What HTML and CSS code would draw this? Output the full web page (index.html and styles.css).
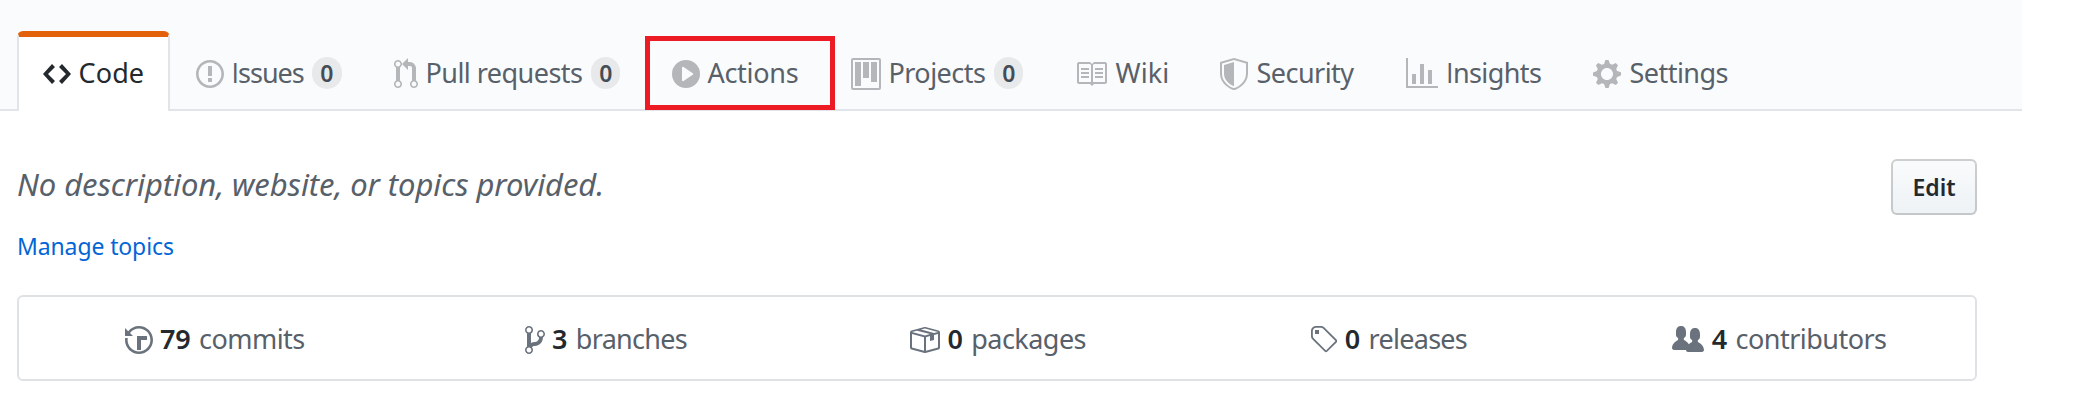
FILE: index.html
```
<!DOCTYPE html>
<html lang="en">
<head>
<meta charset="utf-8">
<title>Repository</title>
<link rel="stylesheet" href="styles.css">
</head>
<body>
<nav class="reponav">
  <a class="tab tab-selected"><svg class="icon" width="28" height="32" viewBox="0 0 14 16"><path fill-rule="evenodd" d="M9.5 3L8 4.5 11.5 8 8 11.5 9.5 13 14 8 9.5 3zm-5 0L0 8l4.5 5L6 11.5 2.5 8 6 4.5 4.5 3z"/></svg><span class="label label-code">Code</span></a>
  <a class="tab"><svg class="icon" width="28" height="32" viewBox="0 0 14 16"><path fill-rule="evenodd" d="M7 2.3c3.14 0 5.7 2.56 5.7 5.7s-2.56 5.7-5.7 5.7A5.71 5.71 0 0 1 1.3 8c0-3.14 2.56-5.7 5.7-5.7zM7 1C3.14 1 0 4.14 0 8s3.14 7 7 7 7-3.14 7-7-3.14-7-7-7zm1 3H6v5h2V4zm0 6H6v2h2v-2z"/></svg><span class="label label-issues">Issues</span><span class="counter">0</span></a>
  <a class="tab"><svg class="icon" width="24" height="32" viewBox="0 0 12 16"><path fill-rule="evenodd" d="M11 11.28V5c-.03-.78-.34-1.47-.94-2.06C9.46 2.35 8.78 2.03 8 2H7V0L4 3l3 3V4h1c.27.02.48.11.69.31.21.2.3.42.31.69v6.28A1.993 1.993 0 0 0 10 15a1.993 1.993 0 0 0 1-3.72zm-1 2.92c-.66 0-1.2-.55-1.2-1.2 0-.65.55-1.2 1.2-1.2.65 0 1.2.55 1.2 1.2 0 .65-.55 1.2-1.2 1.2zM4 3c0-1.11-.89-2-2-2a1.993 1.993 0 0 0-1 3.72v6.56A1.993 1.993 0 0 0 2 15a1.993 1.993 0 0 0 1-3.72V4.72c.59-.34 1-.98 1-1.72zm-.8 10c0 .66-.55 1.2-1.2 1.2-.65 0-1.2-.55-1.2-1.2 0-.65.55-1.2 1.2-1.2.65 0 1.2.55 1.2 1.2zM2 4.2C1.34 4.2.8 3.65.8 3c0-.65.55-1.2 1.2-1.2.65 0 1.2.55 1.2 1.2 0 .65-.55 1.2-1.2 1.2z"/></svg><span class="label">Pull requests</span><span class="counter counter-wide">0</span></a>
  <a class="tab tab-marked"><svg class="icon" width="28" height="32" viewBox="0 0 14 16"><path fill-rule="evenodd" d="M14 8A7 7 0 1 1 0 8a7 7 0 0 1 14 0zm-8.223 3.482l4.599-3.066a.5.5 0 0 0 0-.832L5.777 4.518A.5.5 0 0 0 5 4.934v6.132a.5.5 0 0 0 .777.416z"/></svg><span class="label label-actions">Actions</span></a>
  <a class="tab"><svg class="icon" width="30" height="32" viewBox="0 0 15 16"><path fill-rule="evenodd" d="M10 12h3V2h-3v10zm-4-2h3V2H6v8zm-4 4h3V2H2v12zm-1 1h13V1H1v14zM14 0H1a1 1 0 0 0-1 1v14a1 1 0 0 0 1 1h13a1 1 0 0 0 1-1V1a1 1 0 0 0-1-1z"/></svg><span class="label">Projects</span><span class="counter counter-wide">0</span></a>
  <a class="tab"><svg class="icon" width="32" height="32" viewBox="0 0 16 16"><path fill-rule="evenodd" d="M3 5h4v1H3V5zm0 3h4V7H3v1zm0 2h4V9H3v1zm11-5h-4v1h4V5zm0 2h-4v1h4V7zm0 2h-4v1h4V9zm2-6v9c0 .55-.45 1-1 1H9.5l-1 1-1-1H2c-.55 0-1-.45-1-1V3c0-.55.45-1 1-1h5.5l1 1 1-1H15c.55 0 1 .45 1 1zm-8 .5L7.5 3H2v9h6V3.5zm7-.5H9.5l-.5.5V12h6V3z"/></svg><span class="label label-code label-wide">Wiki</span></a>
  <a class="tab"><svg class="icon" width="28" height="32" viewBox="0 0 14 16"><path fill-rule="evenodd" d="M0 2l7-2 7 2v6.02C14 12.69 8.69 16 7 16c-1.69 0-7-3.31-7-7.98V2zm1 .75L7 1l6 1.75v5.268C13 12.104 8.449 15 7 15c-1.449 0-6-2.896-6-6.982V2.75zm1 .75L7 2v12c-1.207 0-5-2.482-5-5.985V3.5z"/></svg><span class="label label-wide">Security</span></a>
  <a class="tab"><svg class="icon" width="32" height="32" viewBox="0 0 16 16"><path fill-rule="evenodd" d="M16 14v1H0V0h1v14h15zM5 13H3V8h2v5zm4 0H7V3h2v10zm4 0h-2V6h2v7z"/></svg><span class="label label-insights">Insights</span></a>
  <a class="tab"><svg class="icon" width="28" height="32" viewBox="0 0 14 16"><path fill-rule="evenodd" d="M14 8.77v-1.6l-1.94-.64-.45-1.09.88-1.84-1.13-1.13-1.81.91-1.09-.45-.69-1.92h-1.6l-.63 1.94-1.11.45-1.84-.88-1.13 1.13.91 1.81-.45 1.09L0 7.23v1.59l1.94.64.45 1.09-.88 1.84 1.13 1.13 1.81-.91 1.09.45.69 1.92h1.59l.63-1.94 1.11-.45 1.84.88 1.13-1.13-.92-1.81.47-1.09L14 8.75v.02zM7 11c-1.66 0-3-1.34-3-3s1.34-3 3-3 3 1.34 3 3-1.34 3-3 3z"/></svg><span class="label label-wide">Settings</span></a>
</nav>
<main class="content">
  <header class="about">
    <div>
      <p class="description">No description, website, or topics provided.</p>
      <a class="manage">Manage topics</a>
    </div>
    <button class="edit" type="button">Edit</button>
  </header>
  <ul class="summary">
    <li class="stat"><svg class="icon" width="28" height="32" viewBox="0 0 14 16"><path fill-rule="evenodd" d="M8 13H6V6h5v2H8v5zM7 1C4.81 1 2.87 2.02 1.59 3.59L0 2v4h4L2.5 4.5C3.55 3.17 5.17 2.3 7 2.3c3.14 0 5.7 2.56 5.7 5.7s-2.56 5.7-5.7 5.7A5.71 5.71 0 0 1 1.3 8c0-.34.03-.67.09-1H.08C.03 7.33 0 7.66 0 8c0 3.86 3.14 7 7 7s7-3.14 7-7-3.14-7-7-7z"/></svg><strong class="num">79</strong><span class="unit">commits</span></li>
    <li class="stat"><svg class="icon" width="20" height="32" viewBox="0 0 10 16"><path fill-rule="evenodd" d="M10 5c0-1.11-.89-2-2-2a1.993 1.993 0 0 0-1 3.72v.3c-.02.52-.23.98-.63 1.38-.4.4-.86.61-1.38.63-.83.02-1.48.16-2 .45V4.72a1.993 1.993 0 0 0-1-3.72C.88 1 0 1.89 0 3a2 2 0 0 0 1 1.72v6.56c-.59.35-1 .99-1 1.72 0 1.11.89 2 2 2 1.11 0 2-.89 2-2 0-.53-.2-1-.53-1.36.09-.06.48-.41.59-.47.25-.11.56-.17.94-.17 1.05-.05 1.95-.45 2.75-1.25S8.95 7.77 9 6.73h-.02C9.59 6.37 10 5.73 10 5zM2 1.8c.66 0 1.2.55 1.2 1.2 0 .65-.55 1.2-1.2 1.2C1.35 4.2.8 3.65.8 3c0-.65.55-1.2 1.2-1.2zm0 12.41c-.66 0-1.2-.55-1.2-1.2 0-.65.55-1.2 1.2-1.2.65 0 1.2.55 1.2 1.2 0 .65-.55 1.2-1.2 1.2zm6-8c-.66 0-1.2-.55-1.2-1.2 0-.65.55-1.2 1.2-1.2.65 0 1.2.55 1.2 1.2 0 .65-.55 1.2-1.2 1.2z"/></svg><strong class="num">3</strong><span class="unit unit-tight">branches</span></li>
    <li class="stat"><svg class="icon" width="32" height="32" viewBox="0 0 16 16"><path fill-rule="evenodd" d="M1 4.27v7.47c0 .45.3.84.75.97l6.5 1.73c.16.05.34.05.5 0l6.5-1.73c.45-.13.75-.52.75-.97V4.27c0-.45-.3-.84-.75-.97l-6.5-1.74a1.4 1.4 0 0 0-.5 0L1.75 3.3c-.45.13-.75.52-.75.97zm7 9.09l-6-1.59V5l6 1.61v6.75zM2 4l2.5-.67L11 5.06l-2.5.67L2 4zm13 7.77l-6 1.59V6.61l2-.55V8.5l2-.53V5.53L15 5v6.77zm-2-7.24L6.5 2.8l2-.53L15 4l-2 .53z"/></svg><strong class="num">0</strong><span class="unit">packages</span></li>
    <li class="stat"><svg class="icon" width="28" height="32" viewBox="0 0 14 16"><path fill-rule="evenodd" d="M7.73 1.73C7.26 1.26 6.62 1 5.96 1H3.5C2.13 1 1 2.13 1 3.5v2.47c0 .66.27 1.3.73 1.77l6.06 6.06c.39.39 1.02.39 1.41 0l4.59-4.59a.996.996 0 0 0 0-1.41L7.73 1.73zM2.38 7.09c-.31-.3-.47-.7-.47-1.13V3.5c0-.88.72-1.59 1.59-1.59h2.47c.42 0 .83.16 1.13.47l6.14 6.13-4.73 4.73-6.13-6.15zM3.01 3h2v2H3V3h.01z"/></svg><strong class="num">0</strong><span class="unit unit-tight">releases</span></li>
    <li class="stat"><svg class="icon" width="32" height="32" viewBox="0 0 16 16"><path fill-rule="evenodd" d="M16 12.999c0 .439-.45 1-1 1H7.995c-.539 0-.994-.447-.995-.999H1c-.54 0-1-.561-1-1 0-2.634 3-4 3-4s.229-.409 0-1c-.841-.621-1.058-.59-1-3 .058-2.419 1.367-3 2.5-3s2.442.58 2.5 3c.058 2.41-.159 2.379-1 3-.229.59 0 1 0 1s1.549.711 2.42 2.088C9.196 9.369 10 8.999 10 8.999s.229-.409 0-1c-.841-.62-1.058-.59-1-3 .058-2.419 1.367-3 2.5-3s2.437.581 2.495 3c.059 2.41-.158 2.38-1 3-.229.59 0 1 0 1s3.005 1.366 3.005 4"/></svg><strong class="num">4</strong><span class="unit">contributors</span></li>
  </ul>
</main>
</body>
</html>
```
FILE: styles.css
```
*, *::after { box-sizing: border-box; }
body {
  margin: 0;
  background: #fff;
  color: #24292e;
  font-family: "Noto Sans", "Open Sans", sans-serif;
}
.icon { display: block; flex: none; fill: currentColor; }

/* Repository navigation */
.reponav {
  display: grid;
  grid-template-columns: 153px 198px 278px 179px 224px 145px 186px 187px 200px;
  width: 2022px;
  height: 111px;
  padding: 31px 0 0 17px;
  background: #fafbfc;
  border-bottom: 2px solid #e1e4e8;
}
.tab {
  display: flex;
  align-items: center;
  height: 80px;
  padding: 6px 0 0 26px;
  color: #586069;
  font-size: 27px;
  line-height: 36px;
  white-space: nowrap;
}
.tab .icon { color: #b5b6b9; }
.tab-selected {
  padding: 0 0 0 24px;
  background: #fff;
  color: #24292e;
  border: solid #e1e4e8;
  border-width: 6px 2px 0;
  border-top-color: #e36209;
  border-radius: 6px 6px 0 0;
}
.tab-selected .icon { color: #24292e; }
.label { display: block; margin: 0 0 3px 7.5px; letter-spacing: -0.54px; }
.label-code { letter-spacing: 0.12px; }
.label-wide { margin-left: 8.5px; }
.label-actions { letter-spacing: -0.3px; }
.label-issues { margin-left: 7.5px; letter-spacing: -1px; }
.label-insights { margin-left: 8px; letter-spacing: -0.6px; }
.label-issues::first-letter,
.label-insights::first-letter { font-family: "Open Sans", sans-serif; }
.counter {
  width: 30px;
  height: 32px;
  margin: 0 0 2px 8px;
  border-radius: 16px;
  background: #e8e9eb;
  color: #444d56;
  font-size: 23px;
  font-weight: 600;
  line-height: 33px;
  text-align: center;
}
.counter-wide { margin-left: 9px; width: 29px; }
.tab-marked { position: relative; }
.tab-marked::after {
  content: "";
  position: absolute;
  left: -1px;
  top: 5px;
  width: 190px;
  height: 74px;
  border: 5px solid #ed1c24;
}

/* Description and summary */
.content { width: 1960px; margin-left: 17px; padding-top: 48px; }
.about { display: flex; justify-content: space-between; align-items: flex-start; height: 136px; }
.description {
  margin: 3px 0 0;
  color: #586069;
  font-size: 31px;
  font-style: italic;
  line-height: 44px;
  letter-spacing: -0.08px;
}
.manage {
  display: block;
  margin-top: 24px;
  color: #0366d6;
  font-size: 23px;
  line-height: 32px;
  letter-spacing: -0.12px;
}
.edit {
  width: 86px;
  height: 56px;
  padding: 0 0 1px;
  border: 2px solid rgba(27, 31, 35, 0.2);
  border-radius: 6px;
  background: linear-gradient(#fafbfc, #eff3f6 90%) border-box;
  color: #24292e;
  font-family: inherit;
  font-size: 23px;
  font-weight: 600;
}
.summary {
  display: grid;
  grid-template-columns: repeat(5, 1fr);
  height: 86px;
  margin: 0;
  padding: 0;
  border: 2px solid #dfe2e5;
  border-radius: 6px;
  list-style: none;
}
.stat {
  display: flex;
  align-items: center;
  justify-content: center;
  gap: 7.5px;
  padding-top: 4px;
  color: #586069;
  font-size: 27px;
  line-height: 36px;
}
.stat .icon { color: #6a737d; }
.num { margin: 0 1px 3px 0; color: #24292e; font-weight: 600; letter-spacing: -0.2px; }
.unit { margin-bottom: 3px; letter-spacing: -0.54px; }
.unit-tight { letter-spacing: -0.72px; }
```
